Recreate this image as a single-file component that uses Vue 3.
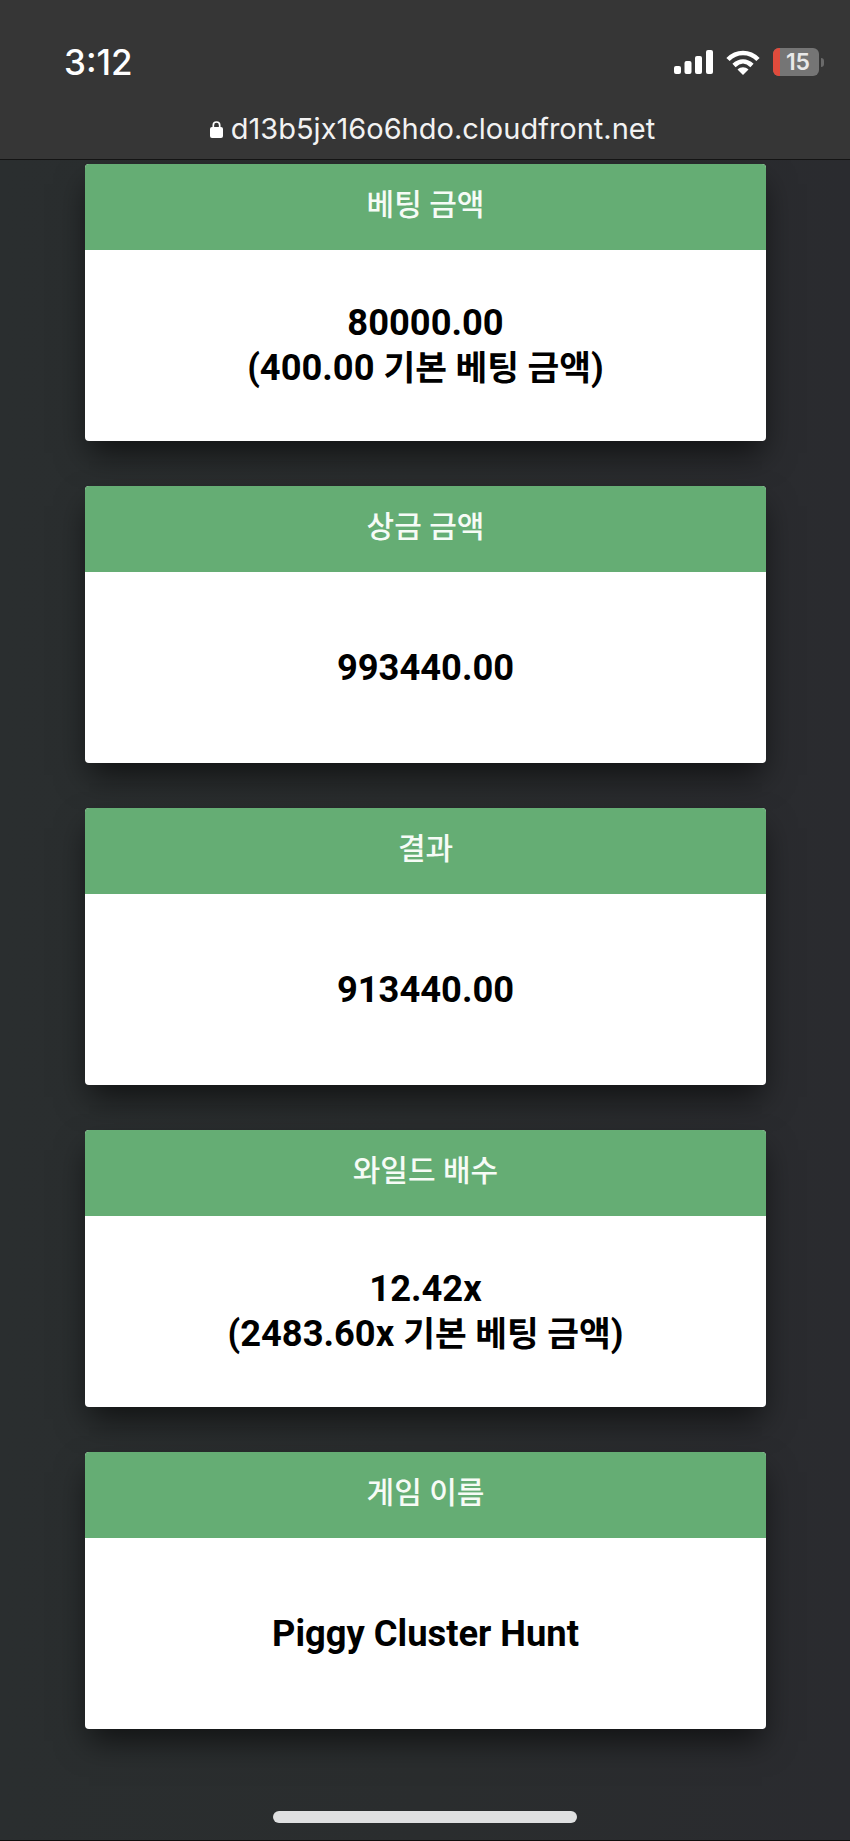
<script setup>
const cards = [
  { title: '베팅 금액', value: '80000.00', note: { base: '(400.00', label: '기본 베팅 금액' } },
  { title: '상금 금액', value: '993440.00' },
  { title: '결과', value: '913440.00' },
  { title: '와일드 배수', value: '12.42x', note: { base: '(2483.60x', label: '기본 베팅 금액' } },
  { title: '게임 이름', value: 'Piggy Cluster Hunt' },
]
</script>

<template>
  <div class="screen">
    <header class="chrome">
      <div class="status">
        <span class="time">3:12</span>
        <div class="indicators">
          <svg class="signal" width="39" height="24" viewBox="0 0 39 24" fill="#fff">
            <rect x="0" y="16" width="7" height="8" rx="2" />
            <rect x="10.500" y="11" width="7" height="13" rx="2" />
            <rect x="21" y="6" width="7" height="18" rx="2" />
            <rect x="32" y="0" width="7" height="24" rx="2" />
          </svg>
          <svg class="wifi" width="34" height="25" viewBox="0 0 34 25" fill="none" stroke="#fff" stroke-width="4.6">
            <path d="M2 9.500C10.500 .8 23.500 .8 32 9.500" />
            <path d="M8 15.500C13.500 10.200 20.500 10.200 26 15.500" />
            <path d="M17 25L11.500 19.500C15 16.500 19 16.500 22.500 19.500Z" fill="#fff" stroke="none" />
          </svg>
          <div class="battery">
            <span class="level"></span>
            <span class="charge">15</span>
          </div>
          <span class="nub"></span>
        </div>
      </div>
      <div class="address">
        <svg width="13" height="18" viewBox="0 0 13 18" fill="#fff">
          <path d="M3.300 8V5.200a3.200 3.200 0 0 1 6.400 0V8" fill="none" stroke="#fff" stroke-width="1.700" />
          <rect x="0" y="7" width="13" height="11" rx="2" />
        </svg>
        <span>d13b5jx16o6hdo.cloudfront.net</span>
      </div>
    </header>

    <main class="list">
      <section v-for="card in cards" :key="card.title" class="card">
        <h2 class="card-title">{{ card.title }}</h2>
        <div class="card-body">
          <div>{{ card.value }}</div>
          <div v-if="card.note">{{ card.note.base }} <span class="ko">{{ card.note.label }}</span>)</div>
        </div>
      </section>
    </main>

    <div class="home-bar"></div>
  </div>
</template>

<style scoped>
.screen {
  position: relative;
  width: 850px;
  height: 1841px;
  overflow: hidden;
  background: linear-gradient(90deg, #2a2e2f 0, #2a2d2e 425px, #2a2b2f 850px);
  border-bottom: 1px solid #0e0e0e;
  box-sizing: border-box;
  font-family: Roboto, "Noto Sans CJK KR", sans-serif;
}
.chrome {
  position: relative;
  z-index: 1;
  height: 159px;
  background: #363636;
  border-bottom: 1px solid #141414;
  color: #fff;
}
.status {
  display: flex;
  justify-content: space-between;
  align-items: center;
  padding: 44px 0 0 64px;
  height: 36px;
}
.time {
  font-family: Inter, sans-serif;
  font-size: 35px;
  font-weight: 500;
  line-height: 36px;
}
.indicators {
  display: flex;
  align-items: center;
  margin-right: 26px;
}
.signal { margin-right: 13px; }
.wifi { margin-right: 13px; }
.battery {
  position: relative;
  width: 46px;
  height: 28px;
  border-radius: 6px;
  background: #757575;
  overflow: hidden;
  display: flex;
  justify-content: center;
  align-items: center;
}
.level {
  position: absolute;
  left: 0;
  top: 0;
  bottom: 0;
  width: 7px;
  background: #e04b3c;
}
.charge {
  position: relative;
  left: 2px;
  font-family: Inter, sans-serif;
  font-size: 23px;
  font-weight: 600;
  color: #e9e9e9;
}
.nub {
  width: 3px;
  height: 9px;
  margin-left: 2px;
  border-radius: 0 3px 3px 0;
  background: #6a6a6a;
}
.address {
  display: flex;
  justify-content: center;
  align-items: center;
  gap: 8px;
  margin-top: 32px;
  padding-left: 15px;
  font-family: Inter, sans-serif;
  font-size: 29px;
  line-height: 34px;
  color: #f2f2f2;
}
.list {
  display: flex;
  flex-direction: column;
  gap: 45px;
  width: 681px;
  margin: 4px 0 0 85px;
}
.card {
  height: 277px;
  border-radius: 4px;
  overflow: hidden;
  background: #fff;
  display: flex;
  flex-direction: column;
  box-shadow: 0 16px 30px -4px rgba(0, 0, 0, 0.6);
}
.card-title {
  flex: 0 0 86px;
  margin: 0;
  background: #65ad74;
  color: #f6fbf6;
  font-size: 30px;
  font-weight: 500;
  line-height: 82px;
  text-align: center;
}
.card-body {
  flex: 1;
  display: flex;
  flex-direction: column;
  justify-content: center;
  padding-bottom: 1px;
  color: #000;
  font-size: 36.300px;
  font-weight: 700;
  line-height: 45px;
  text-align: center;
}
.ko {
  font-size: 34.500px;
}
.home-bar {
  position: absolute;
  left: 273px;
  top: 1811px;
  width: 304px;
  height: 12px;
  border-radius: 6px;
  background: #dfe0e1;
}
</style>
